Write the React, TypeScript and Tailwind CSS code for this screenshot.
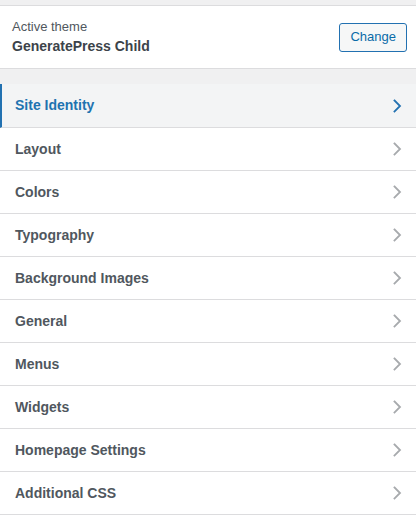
const items = [
  "Layout",
  "Colors",
  "Typography",
  "Background Images",
  "General",
  "Menus",
  "Widgets",
  "Homepage Settings",
  "Additional CSS",
];

function Chevron({ className }: { className: string }) {
  return (
    <svg className={className} width="10" height="16" viewBox="0 0 10 16" fill="none">
      <path d="M2.5 2.5l5.5 5.5-5.5 5.5" stroke="currentColor" strokeWidth="1.8" strokeLinecap="square" />
    </svg>
  );
}

export default function App() {
  return (
    <div
      className="w-[416px] h-[515px] overflow-hidden bg-[#f0f0f1]"
      style={{ fontFamily: '"Liberation Sans", Arial, sans-serif' }}
    >
      <div className="h-[5px]" />
      {/* Active theme */}
      <div className="h-[64px] bg-white border-y border-[#dcdcde] flex items-center justify-between pl-3 pr-[9px]">
        <div>
          <div className="text-[13px] leading-[18px] text-[#50575e]">Active theme</div>
          <div className="text-[14px] leading-[20px] font-bold text-[#3c434a]">GeneratePress Child</div>
        </div>
        <button className="h-[29px] px-[10px] rounded-[3px] border border-[#2271b1] bg-[#f6f7f7] text-[13px] text-[#0a6ba8]">
          Change
        </button>
      </div>

      <div className="h-[15px]" />

      {/* Sections */}
      <div className="h-[44px] bg-[#f3f4f5] border-b border-[#dcdcde] border-l-2 border-l-[#2271b1] flex items-center justify-between pl-[13px] pr-[14px]">
        <span className="text-[14px] font-bold text-[#1e73b0]">Site Identity</span>
        <Chevron className="text-[#2271b1]" />
      </div>
      {items.map((label) => (
        <div
          key={label}
          className="h-[43px] bg-white border-b border-[#dcdcde] flex items-center justify-between pl-[15px] pr-[14px]"
        >
          <span className="text-[14px] font-bold text-[#50575e]">{label}</span>
          <Chevron className="text-[#a7aaad]" />
        </div>
      ))}
    </div>
  );
}
